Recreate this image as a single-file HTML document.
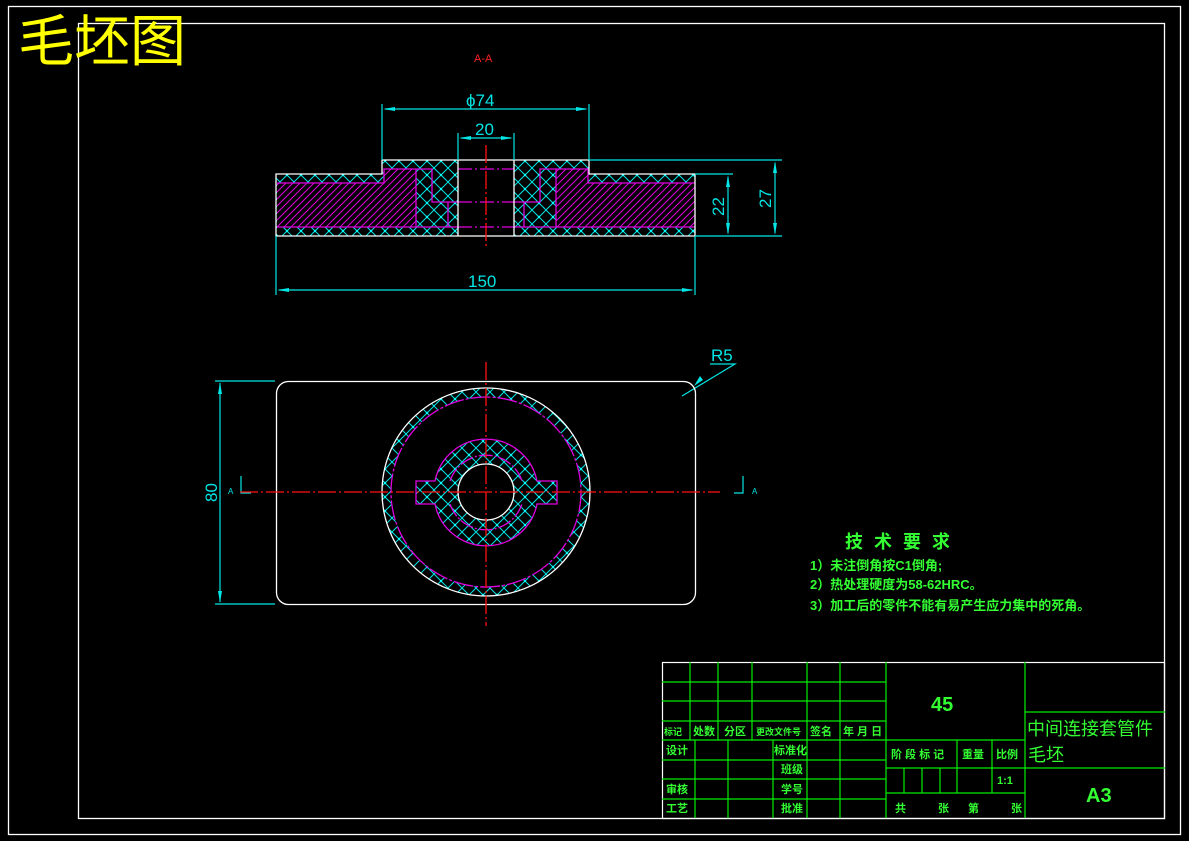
<!DOCTYPE html>
<html><head><meta charset="utf-8"><style>
html,body{margin:0;padding:0;background:#000;}
svg{display:block;}
text{font-family:"Liberation Sans","Noto Sans CJK SC",sans-serif;}
.cad{font-family:"Liberation Sans",sans-serif;}
</style></head><body>
<svg width="1189" height="841" viewBox="0 0 1189 841" xmlns="http://www.w3.org/2000/svg">
<defs>
<pattern id="xh" width="14" height="14" patternUnits="userSpaceOnUse">
<path d="M0 0L14 14M14 0L0 14" stroke="#00e5e5" stroke-width="1"/>
<circle cx="7" cy="7" r="1.2" fill="#00ffff"/>
</pattern>
<pattern id="mh" width="7" height="7" patternUnits="userSpaceOnUse">
<path d="M0 7L7 0M-1 1L1 -1M6 8L8 6" stroke="#e000e0" stroke-width="1"/>
</pattern>
</defs>
<rect width="1189" height="841" fill="#000"/>
<!-- frames -->
<rect x="8.5" y="6.5" width="1172" height="828" fill="none" stroke="#fff" stroke-width="1.3"/>
<rect x="78.5" y="23.5" width="1086" height="795" fill="none" stroke="#fff" stroke-width="1.3"/>
<text x="18" y="61" font-size="56" fill="#ffff00" font-family="'Noto Sans CJK SC',sans-serif">毛坯图</text>
<text x="474" y="62" font-size="11" fill="#ff2020" class="cad">A-A</text>

<!-- section view -->
<path d="M276 174H382V160H589V174H695V236H276Z" fill="url(#xh)"/>
<rect x="458" y="160" width="56" height="76" fill="#000"/>
<path d="M277 183H384V169H416V227H277Z" fill="#000"/>
<path d="M695 183H588V169H556V227H695Z" fill="#000"/>
<path d="M277 183H384V169H416V227H277Z" fill="url(#mh)"/>
<path d="M695 183H588V169H556V227H695Z" fill="url(#mh)"/>
<g fill="none" stroke="#e000e0" stroke-width="1.3">
<path d="M277 183H384V169H432V202H458"/>
<path d="M416 169V227"/><path d="M448 202V227"/>
<path d="M277 227H458"/>
<path d="M695 183H588V169H540V202H514"/>
<path d="M556 169V227"/><path d="M524 202V227"/>
<path d="M695 227H514"/>
<path d="M458 169H514M458 227H514M458 202H514" stroke-dasharray="14 3 2 3"/>
</g>
<g fill="none" stroke="#fff" stroke-width="1.3">
<path d="M276 174H382V160H589V174H695V236H276Z"/>
<path d="M458 160V236M514 160V236"/>
</g>
<path d="M486 145V246" stroke="#ff1010" stroke-width="1.3" stroke-dasharray="18 3 2 3"/>
<!-- dims -->
<g stroke="#00e5e5" stroke-width="1.2" fill="none">
<path d="M382 104V160M589 104V160M385 109H586"/>
<path d="M458 133V160M514 133V160M461 138H511"/>
<path d="M276 236V295M695 236V295M279 290H692"/>
<path d="M695 174H733M589 160H782M695 236H782M728 177V233M775 163V233"/>
<path d="M220 383V602M215 381H275M215 604H275"/>
<path d="M241 476V493H251M743 476V493H734"/>
<path d="M710 364H735L682 396"/>
</g>
<g fill="#00e5e5">
<path d="M383 109l12 -2v4z M588 109l-12 -2v4z M459 138l12-2v4z M513 138l-12-2v4z M277 290l12-2v4z M694 290l-12-2v4z"/>
<path d="M728 175l-2 12h4z M728 235l-2-12h4z M775 161l-2 12h4z M775 235l-2-12h4z M220 382l-2 12h4z M220 603l-2-12h4z M694 386l6-10 3 4z"/>
</g>
<g fill="#00e5e5" class="cad" font-size="17">
<text x="466" y="106">ϕ74</text>
<text x="475" y="135">20</text>
<text x="468" y="287">150</text>
<text x="711" y="361">R5</text>
<text transform="translate(724 216) rotate(-90)">22</text>
<text transform="translate(771 208) rotate(-90)">27</text>
<text transform="translate(217 502) rotate(-90)">80</text>
<text x="228" y="494" font-size="8">A</text>
<text x="752" y="494" font-size="8">A</text>
</g>

<!-- plan view -->
<rect x="276.5" y="381.5" width="419" height="223" rx="12" fill="none" stroke="#fff" stroke-width="1.3"/>
<path fill-rule="evenodd" fill="url(#xh)" d="M382 492a104 104 0 1 0 208 0a104 104 0 1 0 -208 0ZM391 492a95 95 0 1 0 190 0a95 95 0 1 0 -190 0Z"/>
<path fill-rule="evenodd" fill="url(#xh)" d="M435 481A52 52 0 0 1 537 481H557V504H537A52 52 0 0 1 435 504H416V481Z M458 492a28 28 0 1 0 56 0a28 28 0 1 0 -56 0Z"/>
<g fill="none" stroke="#e000e0" stroke-width="1.3">
<circle cx="486" cy="492" r="95" stroke-dasharray="20 2 3 2"/>
<path d="M435 481A52 52 0 0 1 537 481H557V504H537A52 52 0 0 1 435 504H416V481Z"/>
<path d="M450 481A38 38 0 0 1 522 481M450 504A38 38 0 0 0 522 504" stroke-dasharray="14 2 2 2"/>
</g>
<g fill="none" stroke="#fff" stroke-width="1.3">
<circle cx="486" cy="492" r="104"/>
<circle cx="486" cy="492" r="28"/>
</g>
<path d="M240 492H720M486 362V626" stroke="#ff1010" stroke-width="1.3" stroke-dasharray="18 3 2 3"/>

<!-- tech req -->
<g fill="#33ff33" font-weight="bold" font-family="'Noto Serif CJK SC','Noto Sans CJK SC',serif">
<text x="845" y="548" font-size="18" letter-spacing="11">技术要求</text>
<text x="810" y="570" font-size="13">1）未注倒角按C1倒角;</text>
<text x="810" y="589" font-size="13">2）热处理硬度为58-62HRC。</text>
<text x="810" y="610" font-size="13">3）加工后的零件不能有易产生应力集中的死角。</text>
</g>

<!-- title block -->
<g stroke="#00ee00" stroke-width="1.2" fill="none">
<rect x="662.5" y="662.5" width="502" height="156" stroke="#fff"/>
<path d="M662 682H886M662 701H886M662 721H886M662 740H1025M662 760H886M662 779H886M662 799H886"/>
<path d="M690 662V740M718 662V740M752 662V740M807 662V740M840 662V818M886 662V818M1025 662V818"/>
<path d="M695 740V818M728 740V818M773 740V818M807 740V818"/>
<path d="M886 768H1165M886 793H1025M957 740V793M992 740V793M904 768V793M922 768V793M940 768V793M1025 712H1165"/>
</g>
<g fill="#33ff33" font-weight="bold" font-family="'Noto Serif CJK SC','Noto Sans CJK SC',serif" font-size="11">
<text x="664" y="735" font-size="9">标记</text>
<text x="693" y="735">处数</text>
<text x="724" y="735">分区</text>
<text x="756" y="735" font-size="9">更改文件号</text>
<text x="810" y="735">签名</text>
<text x="843" y="735">年 月 日</text>
<text x="666" y="754">设计</text>
<text x="774" y="754">标准化</text>
<text x="781" y="773">班级</text>
<text x="666" y="793">审核</text>
<text x="781" y="793">学号</text>
<text x="666" y="812">工艺</text>
<text x="781" y="812">批准</text>
<text x="891" y="758">阶 段 标 记</text>
<text x="962" y="758">重量</text>
<text x="996" y="758">比例</text>
<text x="997" y="784">1:1</text>
<text x="895" y="812">共</text>
<text x="938" y="812">张</text>
<text x="968" y="812">第</text>
<text x="1011" y="812">张</text>
<text x="931" y="711" font-size="20" class="cad" font-family="'Liberation Serif',serif">45</text>
<text x="1027" y="735" font-size="18" font-weight="normal" font-family="'Noto Sans CJK SC',sans-serif">中间连接套管件</text>
<text x="1028" y="761" font-size="18" font-weight="normal" font-family="'Noto Sans CJK SC',sans-serif">毛坯</text>
<text x="1086" y="802" font-size="20" font-family="'Liberation Serif',serif">A3</text>
</g>
</svg>
</body></html>
